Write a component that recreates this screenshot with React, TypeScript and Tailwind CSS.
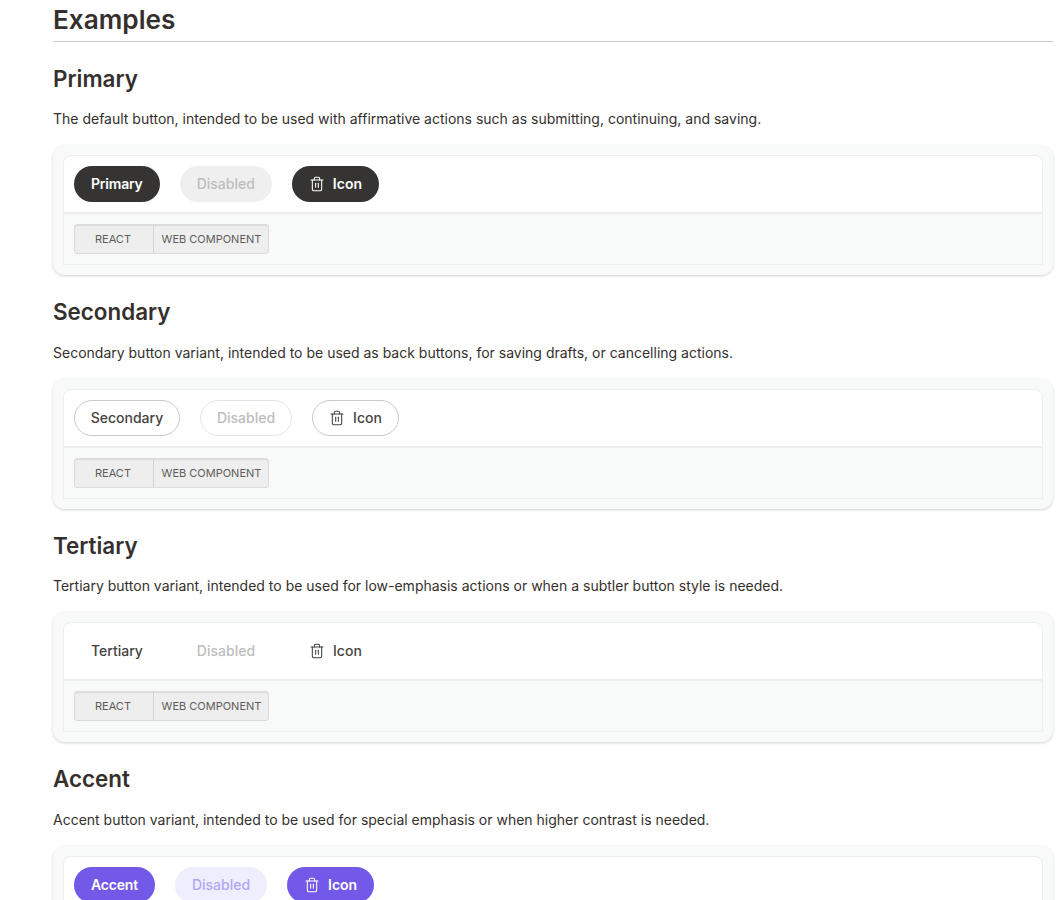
import { Trash2 } from 'lucide-react'

type Variant = {
  title: string
  text: string
  label: string
  main: string
  off: string
  icon: string
}

const variants: Variant[] = [
  {
    title: 'Primary',
    text: 'The default button, intended to be used with affirmative actions such as submitting, continuing, and saving.',
    label: 'Primary',
    main: 'bg-[#353432] px-[17px] text-white font-semibold tracking-[-0.2px]',
    off: 'bg-[#efefef] px-[17px] text-[#bdbdbd] font-medium',
    icon: 'bg-[#353432] px-[17px] text-white font-semibold',
  },
  {
    title: 'Secondary',
    text: 'Secondary button variant, intended to be used as back buttons, for saving drafts, or cancelling actions.',
    label: 'Secondary',
    main: 'border border-[#c9c9c9] bg-white px-[15.7px] text-[#454341] font-medium',
    off: 'border border-[#e4e4e4] bg-white px-4 text-[#bdbdbd] font-medium',
    icon: 'border border-[#c9c9c9] bg-white px-4 text-[#454341] font-medium',
  },
  {
    title: 'Tertiary',
    text: 'Tertiary button variant, intended to be used for low-emphasis actions or when a subtler button style is needed.',
    label: 'Tertiary',
    main: 'px-[17px] text-[#454341] font-medium',
    off: 'px-[17px] text-[#bdbdbd] font-medium',
    icon: 'px-[17px] text-[#454341] font-medium',
  },
  {
    title: 'Accent',
    text: 'Accent button variant, intended to be used for special emphasis or when higher contrast is needed.',
    label: 'Accent',
    main: 'bg-[#7259e8] px-[17px] text-white font-semibold tracking-[-0.2px]',
    off: 'bg-[#eeeefd] px-[17px] text-[#aea9f6] font-medium',
    icon: 'bg-[#7259e8] px-[17px] text-white font-semibold',
  },
]

function Example({ v }: { v: Variant }) {
  const btn = 'flex h-9 items-center gap-2 rounded-full text-sm'
  return (
    <section className="pb-[22.5px]">
      <h3 className="h-[30px] pt-[0.6px] text-[22.4px] leading-[28px] font-semibold text-[#35302e]">{v.title}</h3>
      <p className="mt-[15px] h-5 text-[14px] leading-5 text-[#35302e]">{v.text}</p>
      <div className="mt-4 h-[130px] rounded-xl bg-[#f8f9f9] p-2.5 shadow-[0_1px_3px_rgba(0,0,0,0.18)]">
        <div className="h-[110px] rounded-t-lg border border-[#eeeeee]">
          <div className="flex h-[56px] items-center gap-5 rounded-t-lg bg-white px-2.5">
            <button className={btn + ' ' + v.main}>{v.label}</button>
            <button className={btn + ' ' + v.off}>Disabled</button>
            <button className={btn + ' ' + v.icon}>
              <Trash2 size={16} strokeWidth={1.6} />
              Icon
            </button>
          </div>
          <div className="flex h-[52px] items-start border-t-2 border-[#eeeeee] px-2.5 pt-2.5">
            <div className="flex h-[30px] rounded-[3px] border border-[#dcdcdc] bg-[#eeeeee] text-[11px] text-[#605c5a] shadow-[inset_0_1px_1px_rgba(0,0,0,0.08)]">
              <span className="flex w-[79px] items-center justify-center border-r border-[#d2d2d2] pt-[0.6px] pr-0.5">REACT</span>
              <span className="flex w-[114px] items-center justify-center pt-[0.6px] pl-px">WEB COMPONENT</span>
            </div>
          </div>
        </div>
      </div>
    </section>
  )
}

export default function App() {
  return (
    <main className="h-[900px] overflow-hidden bg-white pr-2 pl-[53px] font-['Inter',sans-serif]">
      <h2 className="h-[42px] border-b border-[#cccccc] pt-[3px] text-[26.2px] leading-[34px] font-semibold text-[#35302e]">Examples</h2>
      <div className="mt-[22px]">
        {variants.map((v) => (
          <Example key={v.title} v={v} />
        ))}
      </div>
    </main>
  )
}
